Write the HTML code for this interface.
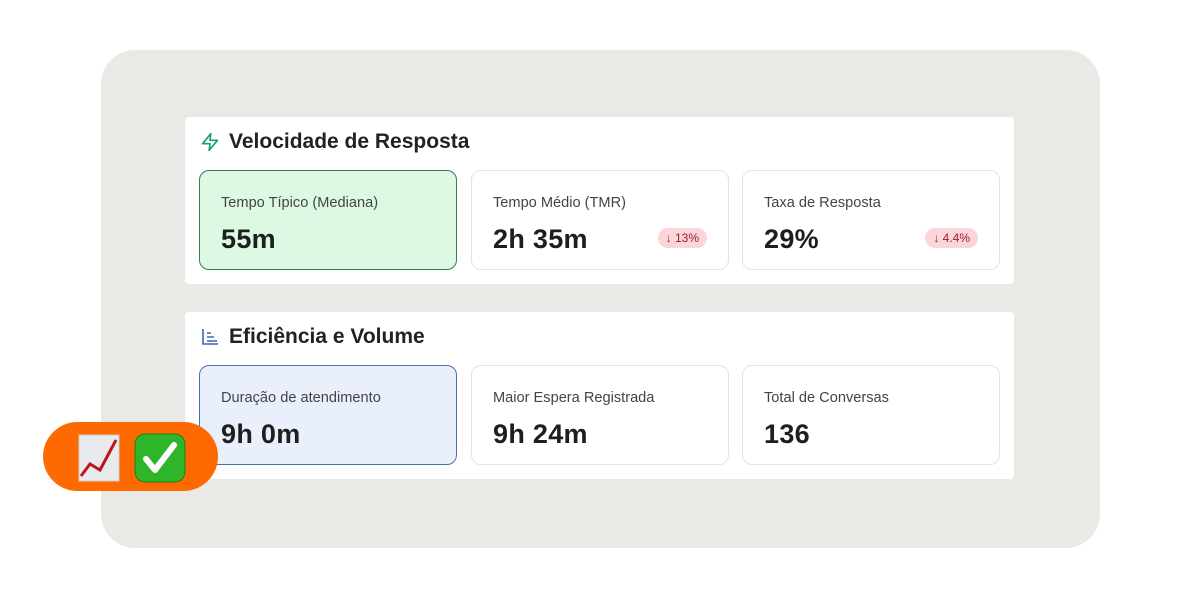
<!DOCTYPE html><html><head><style>
*{margin:0;padding:0;box-sizing:border-box}
body{width:1200px;height:600px;background:#fff;position:relative;font-family:"Liberation Sans",sans-serif;overflow:hidden}
.bg{position:absolute;left:101px;top:50px;width:999px;height:498px;background:#ebe9e5;border-radius:34px}
.panel{position:absolute;left:185px;width:829px;height:167px;background:#fff;border-radius:4px}
.title{position:absolute;left:44px;top:12px;font-size:21px;font-weight:bold;color:#222;line-height:26px}
.ic{position:absolute;left:15px;top:15px}
.card{position:absolute;top:53px;width:258px;height:100px;border:1px solid #e3e3e3;border-radius:10px;background:#fff}
.lab{position:absolute;left:21px;top:24px;font-size:14.6px;color:#444}
.val{position:absolute;left:21px;top:52px;font-size:27px;font-weight:bold;color:#1e1e1e;line-height:32px;letter-spacing:0.3px}
.bad{position:absolute;right:21px;top:57px;height:20px;padding:0 8px;border-radius:10px;background:#fad5da;color:#9a1d30;font-size:12px;line-height:20px}
.pill{position:absolute;left:43px;top:422px;width:175px;height:69px;background:#ff6a00;border-radius:35px}
</style></head><body>
<div class="bg"></div>
<div class="panel" style="top:117px">
<svg class="ic" width="20" height="20" viewBox="0 0 24 24" fill="none" stroke="#17a07a" stroke-width="2" stroke-linejoin="round"><path d="M13 2L3 14h9l-1 8 10-12h-9l1-8z"/></svg>
<div class="title">Velocidade de Resposta</div>
<div class="card" style="left:14px;background:#dcf9e4;border-color:#3d7a52"><div class="lab">Tempo Típico (Mediana)</div><div class="val">55m</div></div>
<div class="card" style="left:286px"><div class="lab">Tempo Médio (TMR)</div><div class="val">2h 35m</div><div class="bad">↓ 13%</div></div>
<div class="card" style="left:557px"><div class="lab">Taxa de Resposta</div><div class="val">29%</div><div class="bad">↓ 4.4%</div></div>
</div>
<div class="panel" style="top:312px">
<svg class="ic" width="20" height="20" viewBox="0 0 20 20" fill="none" stroke="#3d63b8" stroke-width="1.6"><path d="M3 2v15h15M7 6h4M7 10h7M7 14h10"/></svg>
<div class="title">Eficiência e Volume</div>
<div class="card" style="left:14px;background:#e9f0fb;border-color:#4a6fb0"><div class="lab">Duração de atendimento</div><div class="val">9h 0m</div></div>
<div class="card" style="left:286px"><div class="lab">Maior Espera Registrada</div><div class="val">9h 24m</div></div>
<div class="card" style="left:557px"><div class="lab">Total de Conversas</div><div class="val">136</div></div>
</div>
<div class="pill">
<svg style="position:absolute;left:35px;top:12px" width="42" height="48" viewBox="0 0 42 48"><rect x="1" y="1" width="40" height="46" fill="#e8eaee" stroke="#ccc"/><path d="M3 42L12 30L22 36L38 6" fill="none" stroke="#c0141c" stroke-width="3"/></svg>
<svg style="position:absolute;left:91px;top:11px" width="52" height="50" viewBox="0 0 52 50"><rect x="1" y="1" width="50" height="48" rx="10" fill="#2fb52a" stroke="#1d7d1a"/><path d="M12 26l9 11L40 12" fill="none" stroke="#fff" stroke-width="6" stroke-linecap="round" stroke-linejoin="round"/></svg>
</div>
</body></html>
